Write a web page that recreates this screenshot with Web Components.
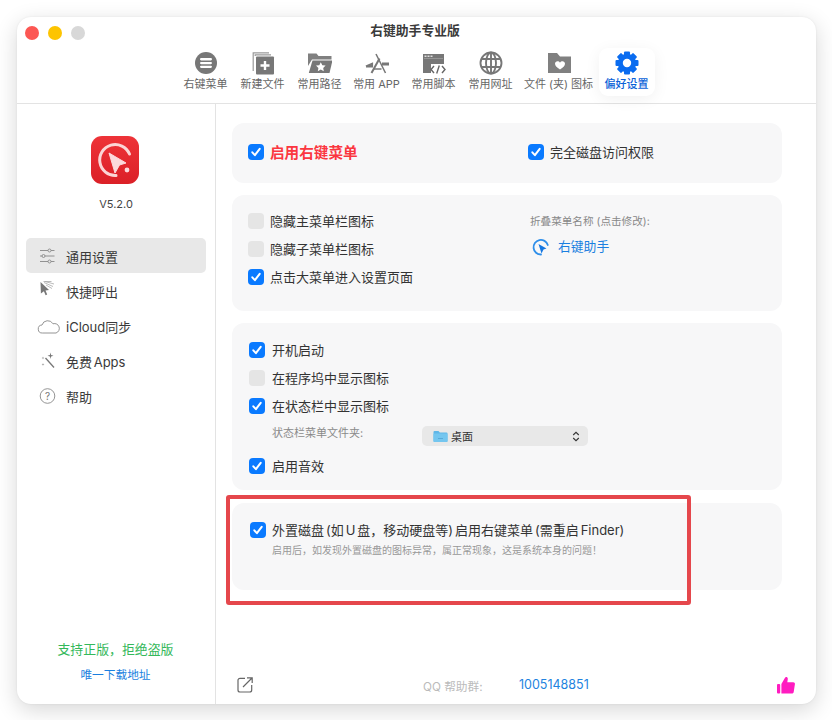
<!DOCTYPE html>
<html lang="zh-CN"><head><meta charset="utf-8"><title>右键助手专业版</title>
<style>
html,body{margin:0;background:#fff}
body{font-family:Inter,"Noto Sans CJK SC",sans-serif;color:#333;height:720px;box-sizing:border-box;padding:17px 0 0 17px;overflow:hidden}
</style></head><body>
<app-window>
  <title-bar slot="top" title="右键助手专业版"></title-bar>
  <tool-bar slot="top">
    <tool-item label="右键菜单"><svg slot="icon" width="24" height="24" viewBox="0 0 24 24"><circle cx="12" cy="12" r="11" fill="#777"/><g fill="#fff"><rect x="6" y="7.1" width="12" height="2.3" rx="1.15"/><rect x="6" y="10.9" width="12" height="2.3" rx="1.15"/><rect x="6" y="14.7" width="12" height="2.3" rx="1.15"/></g></svg></tool-item>
    <tool-item label="新建文件"><svg slot="icon" width="24" height="24" viewBox="0 0 24 24"><path d="M2.2 20V1.8H18M4.2 5V3.8H20" fill="none" stroke="#999" stroke-width="1.2"/><rect x="5" y="5.5" width="18" height="18" rx="1" fill="#777"/><path d="M14 10v9M9.5 14.500h9" stroke="#fff" stroke-width="2.400"/></svg></tool-item>
    <tool-item label="常用路径"><svg slot="icon" width="24" height="24" viewBox="0 0 24 24"><path d="M0 2.500h8.500l2 2.500H23.500v3.500H4L0 15z" fill="#808080"/><path d="M4.500 9.500H24.500L21.500 22H.8z" fill="#777"/><path d="M12.800 11.200l1.500 3 3.300.4-2.400 2.300.6 3.300-3-1.600-3 1.600.6-3.300-2.400-2.300 3.300-.4z" fill="#fff"/></svg></tool-item>
    <tool-item label="常用 APP"><svg slot="icon" width="24" height="24" viewBox="0 0 24 24"><g stroke="#777" fill="none"><path d="M11 3l9.500 19" stroke-width="1.500"/><path d="M14.500 7.500L6.500 22" stroke-width="2"/><path d="M1 15.500l6-2.500v3.500M1 15.500h6" stroke-width="2.200"/><path d="M8.500 18h8" stroke-width="1.600"/><path d="M17 13h7" stroke-width="3"/></g></svg></tool-item>
    <tool-item label="常用脚本"><svg slot="icon" width="24" height="24" viewBox="0 0 24 24"><rect x="1" y="3" width="21" height="19" fill="#777"/><g fill="#ddd"><rect x="2.500" y="4.500" width="2" height="1.500"/><rect x="5.500" y="4.500" width="2" height="1.500"/><rect x="8.500" y="4.500" width="2" height="1.500"/></g><rect x="2" y="7.200" width="19" height=".6" fill="#aaa"/><rect x="9" y="13" width="16" height="11" fill="#fff"/><path d="M12 15l-3 3.500 3 3.500M20 15l3 3.500-3 3.500M17.300 14.500l-2.600 8" fill="none" stroke="#666" stroke-width="1.400"/></svg></tool-item>
    <tool-item label="常用网址"><svg slot="icon" width="24" height="24" viewBox="0 0 24 24"><g fill="none" stroke="#777" stroke-width="1.900"><circle cx="12" cy="12" r="10.500"/><ellipse cx="12" cy="12" rx="5" ry="10.500"/><path d="M12 1.500v21M2.500 8h19M2.500 16h19"/></g></svg></tool-item>
    <tool-item label="文件 (夹) 图标" style="--w:78px"><svg slot="icon" width="24" height="24" viewBox="0 0 24 24"><path d="M1 2h9l3 3.500h11V22H1z" fill="#808080"/><path d="M13 18.500c-3-2-5-3.600-5-5.700 0-2.800 3.600-3.400 5-1.100 1.400-2.300 5-1.700 5 1.100 0 2.100-2 3.700-5 5.700z" fill="#fff"/></svg></tool-item>
    <tool-item label="偏好设置" active><svg slot="icon" width="24" height="24" viewBox="0 0 24 24"><g fill="#0a6cf0"><rect x="9" y=".5" width="6" height="6" rx="1"/><rect x="9" y=".5" width="6" height="6" rx="1" transform="rotate(45 12 12)"/><rect x="9" y=".5" width="6" height="6" rx="1" transform="rotate(90 12 12)"/><rect x="9" y=".5" width="6" height="6" rx="1" transform="rotate(135 12 12)"/><rect x="9" y=".5" width="6" height="6" rx="1" transform="rotate(180 12 12)"/><rect x="9" y=".5" width="6" height="6" rx="1" transform="rotate(225 12 12)"/><rect x="9" y=".5" width="6" height="6" rx="1" transform="rotate(270 12 12)"/><rect x="9" y=".5" width="6" height="6" rx="1" transform="rotate(315 12 12)"/></g><circle cx="12" cy="12" r="6.700" fill="none" stroke="#0a6cf0" stroke-width="5"/></svg></tool-item>
  </tool-bar>

  <side-bar slot="side" version="V5.2.0">
    <svg slot="logo" width="48" height="48" viewBox="0 0 48 48"><defs><linearGradient id="lg" x1="0" y1="0" x2="0" y2="1"><stop offset="0" stop-color="#ee3338"/><stop offset="1" stop-color="#db2027"/></linearGradient></defs><rect width="48" height="48" rx="11" fill="url(#lg)"/><path d="M25 39.500A15.500 15.500 0 1 1 38.500 18" fill="none" stroke="#fbd5d5" stroke-width="3" stroke-linecap="round"/><path d="M18 17l17 10-6.500 2L24 37z" fill="#fcd9dc" stroke="#fcd9dc" stroke-linejoin="round"/><circle cx="36" cy="34" r="2.400" fill="#fcd9dc"/></svg>
    <side-item label="通用设置" active><svg slot="icon" width="24" height="24" viewBox="0 0 24 24"><g fill="#fff" stroke="#888" stroke-width=".9"><path d="M4 6.500h14.500M4 12h14.500M4 17.500h14.500"/><circle cx="13.500" cy="6.500" r="1.500" fill="#e8e8e8"/><circle cx="7.500" cy="12" r="1.500" fill="#e8e8e8"/><circle cx="13.500" cy="17.500" r="1.500" fill="#e8e8e8"/></g></svg></side-item>
    <side-item label="快捷呼出"><svg slot="icon" width="24" height="24" viewBox="0 0 24 24"><path d="M4.500 3l8.500 8-3.500.6 1.700 4-1.600.7-1.700-4-3 2.300z" fill="#777"/><path d="M8 3.500l9 4M9 2.500l9 2.500M10 6l6 3.500M7.500 2.500h8" fill="none" stroke="#aaa" stroke-width=".8"/></svg></side-item>
    <side-item label="iCloud同步"><svg slot="icon" width="24" height="24" viewBox="0 0 24 24"><path d="M6.500 19a4 4 0 0 1-.5-8 6 6 0 0 1 11-1.200 4.700 4.700 0 0 1 3 9.200z" fill="none" stroke="#888" stroke-width=".9"/></svg></side-item>
    <side-item label="免费 Apps" style="--ws:-2px"><svg slot="icon" width="24" height="24" viewBox="0 0 24 24"><path d="M9.500 9l8.500 9.500" stroke="#777" stroke-width="1.300"/><path d="M14.500 3.500l.6 2.500 2.400.7-2.400.7-.6 2.500-.6-2.500-2.400-.7 2.400-.7zM7 7.500l.3 1.200 1.200.3-1.200.3L7 10.500l-.3-1.200L5.500 9l1.200-.3zM7 14l.3 1.200 1.200.3-1.200.3-.3 1.200-.3-1.200-1.200-.3 1.200-.3z" fill="#777"/></svg></side-item>
    <side-item label="帮助"><svg slot="icon" width="24" height="24" viewBox="0 0 24 24"><circle cx="11.500" cy="12" r="7.300" fill="none" stroke="#888" stroke-width=".9"/><text x="11.500" y="15.500" text-anchor="middle" font-size="10" fill="#777" font-family="Inter,sans-serif">?</text></svg></side-item>
    <side-foot slot="foot" slogan="支持正版，拒绝盗版" link="唯一下载地址"></side-foot>
  </side-bar>

  <main-pane slot="main">
    <set-card style="--h:60px;--pad:21px 0 0 16px">
      <card-cols style="--left:280px">
        <check-row checked tone="red">启用右键菜单</check-row>
        <check-row slot="right" checked>完全磁盘访问权限</check-row>
      </card-cols>
    </set-card>
    <set-card style="--h:116px;--pad:12px 0 0 16px">
      <card-cols style="--left:282px">
        <div>
          <check-row style="--rh:28px">隐藏主菜单栏图标</check-row>
          <check-row style="--rh:28px">隐藏子菜单栏图标</check-row>
          <check-row style="--rh:28px" checked>点击大菜单进入设置页面</check-row>
        </div>
        <name-picker slot="right" caption="折叠菜单名称 (点击修改):" value="右键助手">
          <svg slot="icon" width="18" height="18" viewBox="0 0 18 18"><path d="M9 16.500A7.300 7.300 0 1 1 15.800 7" fill="none" stroke="#2f8fea" stroke-width="1.800" stroke-linecap="round"/><path d="M6.500 6l8 4.500-3 1-2 4z" fill="#1677e0"/></svg>
        </name-picker>
      </card-cols>
    </set-card>
    <set-card style="--h:167px;--pad:13px 0 0 17px">
      <check-row style="--rh:28px;--gap:7px" checked>开机启动</check-row>
      <check-row style="--rh:28px;--gap:7px">在程序坞中显示图标</check-row>
      <check-row style="--rh:28px;--gap:7px" checked>在状态栏中显示图标</check-row>
      <folder-select caption="状态栏菜单文件夹:" value="桌面"></folder-select>
      <check-row style="--rh:28px;--gap:7px" checked>启用音效</check-row>
    </set-card>
    <set-card style="--h:87px;--pad:17px 0 0 18px;--top:1px">
      <check-row style="--rh:20px;--ws:-1.700px" checked>外置磁盘 (如 U 盘，移动硬盘等) 启用右键菜单 (需重启 Finder)</check-row>
      <hint-text>启用后，如发现外置磁盘的图标异常，属正常现象，这是系统本身的问题！</hint-text>
      <mark-box slot="over"></mark-box>
    </set-card>
    <pane-foot slot="foot" caption="QQ 帮助群:" number="1005148851">
      <svg slot="share" width="16" height="16" viewBox="0 0 16 16"><path d="M8 1.300H3a2 2 0 0 0-2 2V13a2 2 0 0 0 2 2h9.700a2 2 0 0 0 2-2V8" fill="none" stroke="#666" stroke-width="1.200"/><path d="M6 10l9-9M10 .8h5.200V6" fill="none" stroke="#666" stroke-width="1.200"/></svg>
      <svg slot="like" width="18" height="18" viewBox="0 0 18 18"><rect x="0" y="8" width="3.200" height="9.500" rx="1" fill="#ff1cc0"/><path d="M4.400 8L8 1.700c.4-1.200 3-1.200 2.800 1.200L10.300 6.300H16.200c1.300 0 1.900 1 1.700 2l-1.200 7.600c-.2 1-1 1.600-2 1.600H4.400z" fill="#ff1cc0"/></svg>
    </pane-foot>
  </main-pane>
</app-window>

<script>
function def(name, css, html){
  customElements.define(name, class extends HTMLElement{
    constructor(){super();const r=this.attachShadow({mode:'open'});
      const get=a=>this.getAttribute(a)||'';
      r.innerHTML='<style>'+css+'</style>'+(typeof html==='function'?html(get,this):html);}
  });
}
def('app-window',`
:host{display:flex;flex-direction:column;width:799px;height:687px;background:#fff;border-radius:14px;box-shadow:0 6px 22px rgba(0,0,0,.16),0 0 2px rgba(0,0,0,.08);overflow:hidden}
.top{display:block;flex:none;border-bottom:1px solid #e3e3e3}
.body{display:flex;flex:1;min-height:0}
`,`<div class="top"><slot name="top"></slot></div><div class="body"><slot name="side"></slot><slot name="main"></slot></div>`);

def('title-bar',`
:host{display:grid;grid-template-columns:1fr auto 1fr;align-items:center;height:31px;padding:0 8px;box-sizing:border-box}
.lights{display:flex;gap:9px}
i{display:block;width:14px;height:14px;border-radius:50%}
.t{font-size:12.800px;font-weight:700;color:#3a3a3a;line-height:26px;padding:0 3px 4px 0}
`,g=>`<div class="lights"><i style="background:#fc5753"></i><i style="background:#fdc400"></i><i style="background:#d8d8d8"></i></div><div class="t">${g('title')}</div><div></div>`);

def('tool-bar',`
:host{display:flex;justify-content:center;gap:1px;height:55px;padding-right:1px;box-sizing:border-box}
`,`<slot></slot>`);

def('tool-item',`
:host{display:flex;flex-direction:column;align-items:center;width:var(--w,56px);height:48px;padding-top:3px;box-sizing:border-box;border-radius:9px;color:#666;font-size:11px}
:host([active]){background:#fff;box-shadow:0 3px 16px rgba(0,0,0,.06);color:#0a62d8;font-weight:500}
.i{height:24px;display:flex}
.l{line-height:14px;margin-top:2px;white-space:nowrap}
`,g=>`<div class="i"><slot name="icon"></slot></div><div class="l">${g('label')}</div>`);

def('side-bar',`
:host{display:flex;flex-direction:column;flex:none;width:199px;box-sizing:border-box;border-right:1px solid #e3e3e3;padding:32px 9px 19px}
.logo{display:flex;justify-content:center;padding-right:2px}
.v{text-align:center;font-size:11px;line-height:16px;margin-top:12px;color:#444}
nav{display:flex;flex-direction:column;margin-top:26px}
.f{margin-top:auto}
`,g=>`<div class="logo"><slot name="logo"></slot></div><div class="v">${g('version')}</div><nav><slot></slot></nav><div class="f"><slot name="foot"></slot></div>`);

def('side-item',`
:host{display:flex;align-items:center;height:35px;padding-left:10px;gap:6px;border-radius:5px;font-size:13px;color:#3a3a3a}
:host([active]){background:#e8e8e8}
.i{width:24px;height:24px;display:flex}
.l{padding-top:2px;word-spacing:var(--ws,0)}
`,g=>`<div class="i"><slot name="icon"></slot></div><div class="l">${g('label')}</div>`);

def('side-foot',`
:host{display:flex;flex-direction:column;align-items:center;gap:5px;padding-right:1px}
div{line-height:20px;white-space:nowrap}
.a{font-size:12.900px;color:#34b85a}
.b{font-size:11.700px;color:#1a7fe0}
`,g=>`<div class="a">${g('slogan')}</div><div class="b">${g('link')}</div>`);

def('main-pane',`
:host{display:flex;flex-direction:column;flex:1;min-width:0;padding:19px 34px 0 16px;box-sizing:border-box}
.c{display:flex;flex-direction:column;gap:12px}
.f{margin:auto -34px 0 -16px}
`,`<div class="c"><slot></slot></div><div class="f"><slot name="foot"></slot></div>`);

def('set-card',`
:host{display:block;position:relative;height:var(--h);padding:var(--pad);margin-top:var(--top,0);box-sizing:border-box;background:#f7f7f8;border-radius:12px}
`,`<slot></slot><slot name="over"></slot>`);

def('card-cols',`
:host{display:grid;grid-template-columns:var(--left) 1fr;align-items:start}
`,`<div><slot></slot></div><div><slot name="right"></slot></div>`);

def('check-row',`
:host{display:flex;align-items:center;gap:var(--gap,6px);height:var(--rh,16px);font-size:13px;color:#333;white-space:nowrap;word-spacing:var(--ws,0)}
:host([tone=red]){color:#fb3640;font-size:14.600px;font-weight:700}
.b{flex:none;width:16px;height:16px;border-radius:4px;background:#e5e5e5;display:flex;align-items:center;justify-content:center}
:host([checked]) .b{background:#0a7aff}
svg{display:none}
:host([checked]) svg{display:block}
.t{padding-bottom:2px}
`,`<div class="b"><svg width="12" height="12" viewBox="0 0 12 12"><path d="M2.300 6.300l2.600 2.900 4.800-6.400" fill="none" stroke="#fff" stroke-width="2" stroke-linecap="round" stroke-linejoin="round"/></svg></div><div class="t"><slot></slot></div>`);

def('name-picker',`
:host{display:flex;flex-direction:column;gap:6px;padding-top:7px}
.c{font-size:10.600px;color:#888;line-height:16px;white-space:nowrap}
.v{display:flex;align-items:center;gap:8px;font-size:12.800px;color:#1a7fe0;line-height:20px;padding-left:2px}
.v span{padding-top:1px}
`,g=>`<div class="c">${g('caption')}</div><div class="v"><slot name="icon"></slot><span>${g('value')}</span></div>`);

def('folder-select',`
:host{display:flex;align-items:center;height:32px;padding-left:23px}
.c{width:150px;flex:none;font-size:11px;color:#8a8a8a;padding-bottom:6px;line-height:16px}
.d{width:166px;height:20px;flex:none;background:#e8e8e8;border-radius:5px;display:flex;align-items:center;padding:0 8px 0 11px;box-sizing:border-box;font-size:11px;color:#333;gap:3px}
.s{flex:1}
`,g=>`<div class="c">${g('caption')}</div><div class="d"><svg width="15" height="13" viewBox="0 0 15 13"><path d="M.5 2a1 1 0 0 1 1-1h4l1.300 1.500h6.700a1 1 0 0 1 1 1V11a1 1 0 0 1-1 1h-12a1 1 0 0 1-1-1z" fill="#5fb7e8"/><rect x=".5" y="3.500" width="14" height="8.500" rx="1" fill="#74c6ef"/><path d="M5 8.500h5" stroke="#4ea3d4" stroke-width=".8"/></svg><span>${g('value')}</span><span class="s"></span><svg width="8" height="11" viewBox="0 0 8 11"><path d="M1.200 4L4 1.300 6.800 4M1.200 7L4 9.700 6.800 7" fill="none" stroke="#333" stroke-width="1.100"/></svg></div>`);

def('hint-text',`
:host{display:block;margin:2px 0 0 22px;font-size:10px;line-height:16px;color:#999;white-space:nowrap}
`,`<slot></slot>`);

def('mark-box',`
:host{position:absolute;left:-6px;top:-8px;width:465px;height:110px;box-sizing:border-box;border:4px solid #e5474c;border-radius:3px;pointer-events:none}
`,``);

def('pane-foot',`
:host{display:grid;grid-template-columns:186px 96px 258px 1fr;align-items:center;height:38px;padding-left:21px;box-sizing:border-box}
.q{font-size:11.700px;color:#bbb;white-space:nowrap}
.n{font-size:12.500px;color:#2283e0;margin-top:-2px}
.i{display:flex}
`,g=>`<div class="i"><slot name="share"></slot></div><div class="q">${g('caption')}</div><div class="n">${g('number')}</div><div class="i"><slot name="like"></slot></div>`);
</script>
</body></html>
